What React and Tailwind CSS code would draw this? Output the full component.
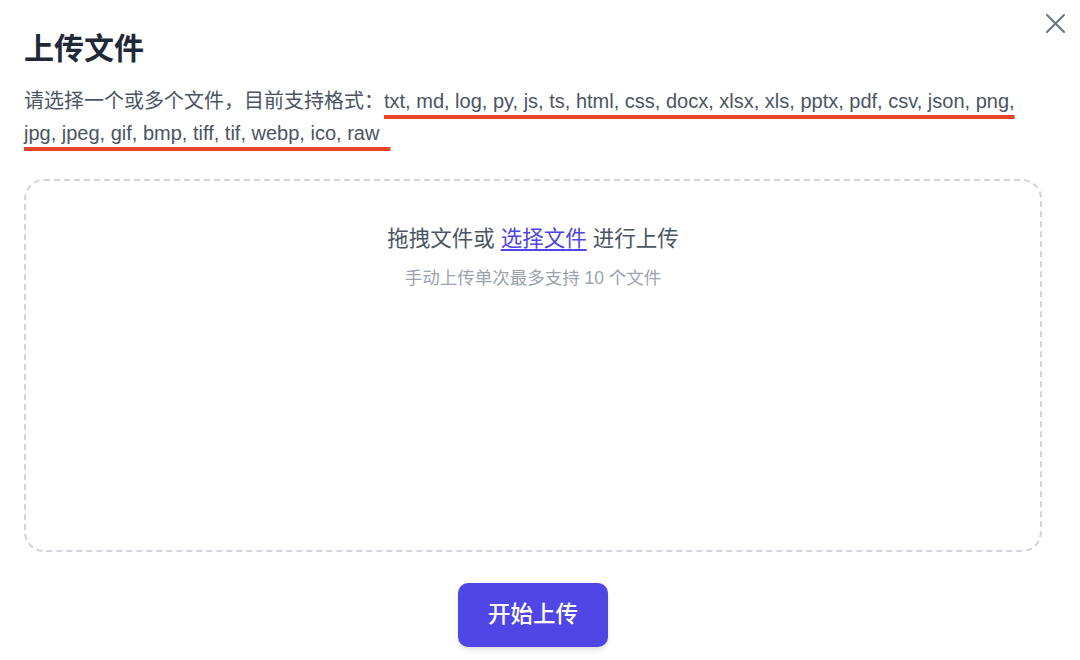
import React from "react";

const FORMATS_LINE =
  "txt, md, log, py, js, ts, html, css, docx, xlsx, xls, pptx, pdf, csv, json, png, jpg, jpeg, gif, bmp, tiff, tif, webp, ico, raw\u00a0\u00a0";

export default function App() {
  return (
    <div
      className="relative w-[1080px] h-[660px] bg-white overflow-hidden"
      style={{ fontFamily: '"Liberation Sans", "Noto Sans CJK SC", sans-serif' }}
    >
      {/* Close */}
      <button className="absolute left-[1045px] top-[13px] text-[#6b7280]">
        <svg width="21" height="21" viewBox="0 0 21 21" fill="none" stroke="currentColor" strokeWidth="2" strokeLinecap="round">
          <path d="M2 2 L19 19 M19 2 L2 19" />
        </svg>
      </button>

      <div className="pl-6 pt-[31px] w-[1042px]">
        <h1 className="text-[30px] leading-[36px] font-bold text-[#1f2937]">
          上传文件
        </h1>

        <p className="mt-[18px] text-[20px] leading-[32px] text-[#4b5563]">
          请选择一个或多个文件，目前支持格式：
          <span className="underline decoration-[#e9432b] decoration-[4px] underline-offset-[7px]">
            {FORMATS_LINE}
          </span>
        </p>

        {/* Drop zone */}
        <div className="mt-[30px] h-[373px] rounded-[20px] border-2 border-dashed border-[#d1d5db] flex flex-col items-center pt-[43px]">
          <div className="text-[21.5px] leading-[30px] text-[#4b5563]">
            拖拽文件或{" "}
            <a href="#" className="text-[#4f46e5] underline underline-offset-[3px]">
              选择文件
            </a>{" "}
            进行上传
          </div>
          <div className="mt-[12px] text-[17.5px] leading-[24px] text-[#9ca3af]">
            手动上传单次最多支持 10 个文件
          </div>
        </div>

        <div className="flex justify-center mt-[31px]">
          <button className="h-[64px] px-[30px] rounded-[10px] bg-[#4f46e5] text-white text-[22.5px] font-medium shadow-md">
            开始上传
          </button>
        </div>
      </div>
    </div>
  );
}
